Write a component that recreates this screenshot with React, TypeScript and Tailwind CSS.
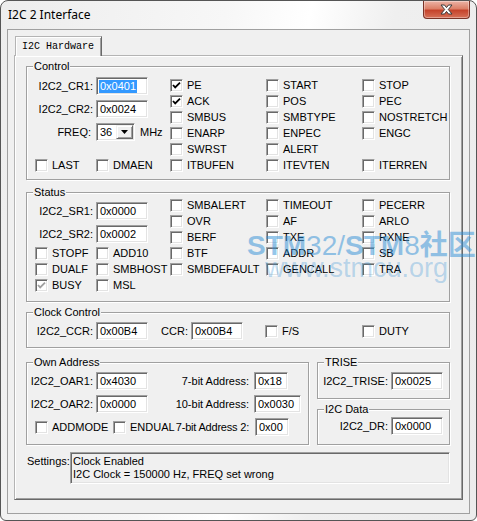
import React from "react";

const ui = "font-['Liberation_Sans',Arial,sans-serif] text-[11px] leading-[13px] text-black";

function Edit({ value, className = "w-[52px]", selected = false }: { value: string; className?: string; selected?: boolean }) {
  return (
    <div
      className={`h-[18px] shrink-0 flex items-center pl-[2px] bg-white border border-t-[#a0a0a0] border-l-[#a0a0a0] border-r-white border-b-white shadow-[inset_1px_1px_0_#696969,inset_-1px_-1px_0_#e3e3e3] ${className}`}
    >
      <span className={selected ? "bg-[#3399ff] text-white px-[1px]" : "px-[1px]"}>{value}</span>
    </div>
  );
}

function Check({
  label,
  checked = false,
  disabled = false,
  className = "",
}: {
  label?: string;
  checked?: boolean;
  disabled?: boolean;
  className?: string;
}) {
  return (
    <div className={`flex items-center h-[16px] shrink-0 ${className}`}>
      <span className="w-[13px] h-[13px] shrink-0 flex items-center justify-center bg-white border border-t-[#a0a0a0] border-l-[#a0a0a0] border-r-white border-b-white shadow-[inset_1px_1px_0_#696969,inset_-1px_-1px_0_#e3e3e3]">
        {checked && (
          <svg width="9" height="9" viewBox="0 0 9 9">
            <polyline
              points="1,4 3.2,6.4 8,1.6"
              fill="none"
              stroke={disabled ? "#a0a0a0" : "#000"}
              strokeWidth="1.8"
            />
          </svg>
        )}
      </span>
      {label && <span className="ml-[4px] whitespace-nowrap">{label}</span>}
    </div>
  );
}

function Group({ title, className = "", children }: { title: string; className?: string; children?: React.ReactNode }) {
  return (
    <div className={`relative shrink-0 border border-[#a0a0a0] shadow-[inset_1px_1px_0_#fff,1px_1px_0_#fff] ${className}`}>
      <span className="absolute left-[6px] -top-[7px] bg-[#f0f0f0] px-[1px] leading-[13px] whitespace-nowrap">{title}</span>
      {children}
    </div>
  );
}

function LabeledEdit({ label, value, selected }: { label: string; value: string; selected?: boolean }) {
  return (
    <div className="flex items-center h-[18px]">
      <span className="w-[66px] text-right whitespace-nowrap">{label}</span>
      <Edit value={value} selected={selected} className="ml-[3px] w-[52px]" />
    </div>
  );
}

function CheckColumn({ items }: { items: { label?: string; checked?: boolean }[] }) {
  return (
    <div className="w-[96px] flex flex-col shrink-0">
      {items.map((it, i) =>
        it.label ? <Check key={i} label={it.label} checked={it.checked} /> : <div key={i} className="h-[16px]" />
      )}
    </div>
  );
}

function CloseButton() {
  return (
    <div className="ml-auto mr-[6px] w-[47px] h-[18px] rounded-b-[4px] border border-t-0 border-[#7a3327] bg-[linear-gradient(to_bottom,#ecb4a6,#dc8068_45%,#c5432b_55%,#d77158)] shadow-[inset_0_0_0_1px_rgba(255,255,255,0.35)] flex items-center justify-center">
      <svg width="15" height="11" viewBox="0 0 15 11">
        <path
          d="M2 1 H5.5 L7.5 3.6 L9.5 1 H13 L9.3 5.5 L13 10 H9.5 L7.5 7.4 L5.5 10 H2 L5.7 5.5 Z"
          fill="#fff"
          stroke="#3b3b3b"
          strokeWidth="1"
          strokeLinejoin="round"
        />
      </svg>
    </div>
  );
}

export default function App() {
  return (
    <div className="w-[477px] h-[521px] bg-white relative overflow-hidden">
      <div
        className={`w-[477px] h-[521px] flex flex-col border border-[#555] rounded-t-[8px] rounded-b-[6px] bg-[linear-gradient(100deg,#ededed,#f7f7f7_40%,#ffffff_55%,#efefef_70%,#ececec)] ${ui}`}
      >
        {/* caption */}
        <div className="h-[28px] flex items-start shrink-0">
          <span className="mt-[6px] ml-[7px] font-['Noto_Sans',sans-serif] text-[12px] leading-[16px]">I2C 2 Interface</span>
          <CloseButton />
        </div>

        {/* client area */}
        <div className="mx-[6px] h-[485px] shrink-0 border border-[#a0a0a0] bg-[#f0f0f0] flex flex-col">
          <div className="flex mt-[6px] ml-[6px] relative z-10">
            <div className="ml-[1px] w-[87px] h-[20px] -mb-[1px] bg-[#f0f0f0] border-t border-l border-r border-t-[#b4b4b4] border-l-[#b4b4b4] border-r-[#696969] shadow-[inset_1px_1px_0_#fff,inset_-1px_0_0_#a0a0a0] flex items-center pl-[6px] pb-[1px] font-['Liberation_Mono',monospace] text-[10px]">
              I2C Hardware
            </div>
          </div>

          {/* tab page */}
          <div className="ml-[6px] w-[449px] h-[445px] shrink-0 bg-[#f0f0f0] border border-t-[#b4b4b4] border-l-[#b4b4b4] border-r-[#696969] border-b-[#696969] shadow-[inset_1px_1px_0_#fff,inset_-1px_-1px_0_#a0a0a0] pl-[11px] flex flex-col">
            <Group title="Control" className="mt-[10px] w-[424px] h-[114px]">
              <div className="flex pt-[10px]">
                <div className="w-[143px] h-[96px] flex flex-col shrink-0">
                  <LabeledEdit label="I2C2_CR1:" value="0x0401" selected />
                  <div className="mt-[5px]">
                    <LabeledEdit label="I2C2_CR2:" value="0x0024" />
                  </div>
                  <div className="mt-[5px] flex items-center h-[18px]">
                    <span className="w-[64px] text-right">FREQ:</span>
                    <div className="ml-[5px] w-[39px] h-[18px] flex items-center bg-white border border-t-[#a0a0a0] border-l-[#a0a0a0] border-r-white border-b-white shadow-[inset_1px_1px_0_#696969,inset_-1px_-1px_0_#e3e3e3] pl-[3px] pr-[1px] py-[1px]">
                      <span>36</span>
                      <span className="ml-auto w-[17px] h-[14px] bg-[#f0f0f0] border border-t-[#f0f0f0] border-l-[#f0f0f0] border-r-[#696969] border-b-[#696969] shadow-[inset_1px_1px_0_#fff,inset_-1px_-1px_0_#a0a0a0] flex items-center justify-center">
                        <svg width="7" height="4" viewBox="0 0 7 4">
                          <path d="M0 0 H7 L3.5 4 Z" fill="#000" />
                        </svg>
                      </span>
                    </div>
                    <span className="ml-[5px]">MHz</span>
                  </div>
                  <div className="mt-auto flex pl-[8px]">
                    <Check label="LAST" className="w-[61px]" />
                    <Check label="DMAEN" />
                  </div>
                </div>
                <CheckColumn
                  items={[
                    { label: "PE", checked: true },
                    { label: "ACK", checked: true },
                    { label: "SMBUS" },
                    { label: "ENARP" },
                    { label: "SWRST" },
                    { label: "ITBUFEN" },
                  ]}
                />
                <CheckColumn
                  items={[
                    { label: "START" },
                    { label: "POS" },
                    { label: "SMBTYPE" },
                    { label: "ENPEC" },
                    { label: "ALERT" },
                    { label: "ITEVTEN" },
                  ]}
                />
                <CheckColumn
                  items={[
                    { label: "STOP" },
                    { label: "PEC" },
                    { label: "NOSTRETCH" },
                    { label: "ENGC" },
                    {},
                    { label: "ITERREN" },
                  ]}
                />
              </div>
            </Group>

            <Group title="Status" className="mt-[12px] w-[424px] h-[110px]">
              <div className="flex pt-[4px]">
                <div className="w-[143px] h-[96px] flex flex-col shrink-0 pt-[5px]">
                  <LabeledEdit label="I2C2_SR1:" value="0x0000" />
                  <div className="mt-[5px]">
                    <LabeledEdit label="I2C2_SR2:" value="0x0002" />
                  </div>
                  <div className="mt-auto flex flex-col pl-[8px]">
                    <div className="flex">
                      <Check label="STOPF" className="w-[61px]" />
                      <Check label="ADD10" />
                    </div>
                    <div className="flex">
                      <Check label="DUALF" className="w-[61px]" />
                      <Check label="SMBHOST" />
                    </div>
                    <div className="flex">
                      <Check label="BUSY" checked disabled className="w-[61px]" />
                      <Check label="MSL" />
                    </div>
                  </div>
                </div>
                <CheckColumn
                  items={[
                    { label: "SMBALERT" },
                    { label: "OVR" },
                    { label: "BERF" },
                    { label: "BTF" },
                    { label: "SMBDEFAULT" },
                  ]}
                />
                <CheckColumn
                  items={[{ label: "TIMEOUT" }, { label: "AF" }, { label: "TXE" }, { label: "ADDR" }, { label: "GENCALL" }]}
                />
                <CheckColumn
                  items={[{ label: "PECERR" }, { label: "ARLO" }, { label: "RXNE" }, { label: "SB" }, { label: "TRA" }]}
                />
              </div>
            </Group>

            <Group title="Clock Control" className="mt-[10px] w-[424px] h-[36px]">
              <div className="flex items-center pt-[9px]">
                <LabeledEdit label="I2C2_CCR:" value="0x00B4" />
                <span className="w-[40px] text-right">CCR:</span>
                <Edit value="0x00B4" className="ml-[3px] w-[52px]" />
                <Check label="F/S" className="ml-[22px] w-[97px]" />
                <Check label="DUTY" />
              </div>
            </Group>

            <div className="mt-[14px] flex">
              <Group title="Own Address" className="w-[283px] h-[83px]">
                <div className="flex flex-col pt-[9px]">
                  <div className="flex items-center">
                    <LabeledEdit label="I2C2_OAR1:" value="0x4030" />
                    <span className="w-[101px] text-right whitespace-nowrap">7-bit Address:</span>
                    <Edit value="0x18" className="ml-[5px] w-[34px]" />
                  </div>
                  <div className="mt-[5px] flex items-center">
                    <LabeledEdit label="I2C2_OAR2:" value="0x0000" />
                    <span className="w-[101px] text-right whitespace-nowrap">10-bit Address:</span>
                    <Edit value="0x0030" className="ml-[5px] w-[47px]" />
                  </div>
                  <div className="mt-[5px] flex items-center h-[18px] pl-[8px]">
                    <Check label="ADDMODE" className="w-[78px]" />
                    <div className="w-[136px] flex items-center">
                      <Check label="ENDUAL" />
                      <span className="ml-auto whitespace-nowrap tracking-[-0.2px]">7-bit Address 2:</span>
                    </div>
                    <Edit value="0x00" className="ml-[6px] w-[34px]" />
                  </div>
                </div>
              </Group>

              <div className="ml-[8px] flex flex-col">
                <Group title="TRISE" className="w-[133px] h-[37px]">
                  <div className="flex items-center pt-[9px]">
                    <span className="w-[70px] text-right whitespace-nowrap">I2C2_TRISE:</span>
                    <Edit value="0x0025" className="ml-[3px] w-[52px]" />
                  </div>
                </Group>
                <Group title="I2C Data" className="mt-[10px] w-[133px] h-[36px]">
                  <div className="flex items-center pt-[7px]">
                    <span className="w-[70px] text-right whitespace-nowrap">I2C2_DR:</span>
                    <Edit value="0x0000" className="ml-[3px] w-[52px]" />
                  </div>
                </Group>
              </div>
            </div>

            <div className="mt-[7px] flex">
              <span className="w-[44px] pl-[1px] pt-[3px] shrink-0">Settings:</span>
              <div className="w-[380px] h-[32px] bg-[#f0f0f0] border border-t-[#a0a0a0] border-l-[#a0a0a0] border-r-white border-b-white shadow-[inset_1px_1px_0_#696969,inset_-1px_-1px_0_#e3e3e3] pl-[2px] pt-[2px] flex flex-col">
                <span>Clock Enabled</span>
                <span>I2C Clock = 150000 Hz, FREQ set wrong</span>
              </div>
            </div>
          </div>
        </div>
      </div>

      {/* forum watermark */}
      <div className="absolute left-[247px] top-[229px] pointer-events-none whitespace-nowrap font-['Liberation_Sans','Noto_Sans_CJK_SC',sans-serif] text-[28px] leading-none text-[#2e8fd6]/50">
        <b>STM</b>32/<b>STM</b>8<b className="font-['Noto_Sans_CJK_SC',sans-serif]">社区</b>
      </div>
      <div className="absolute left-[265px] top-[255px] pointer-events-none whitespace-nowrap font-['Liberation_Sans',sans-serif] text-[27px] leading-none text-[#2e8fd6]/30">
        www.stmcu.org
      </div>
    </div>
  );
}
